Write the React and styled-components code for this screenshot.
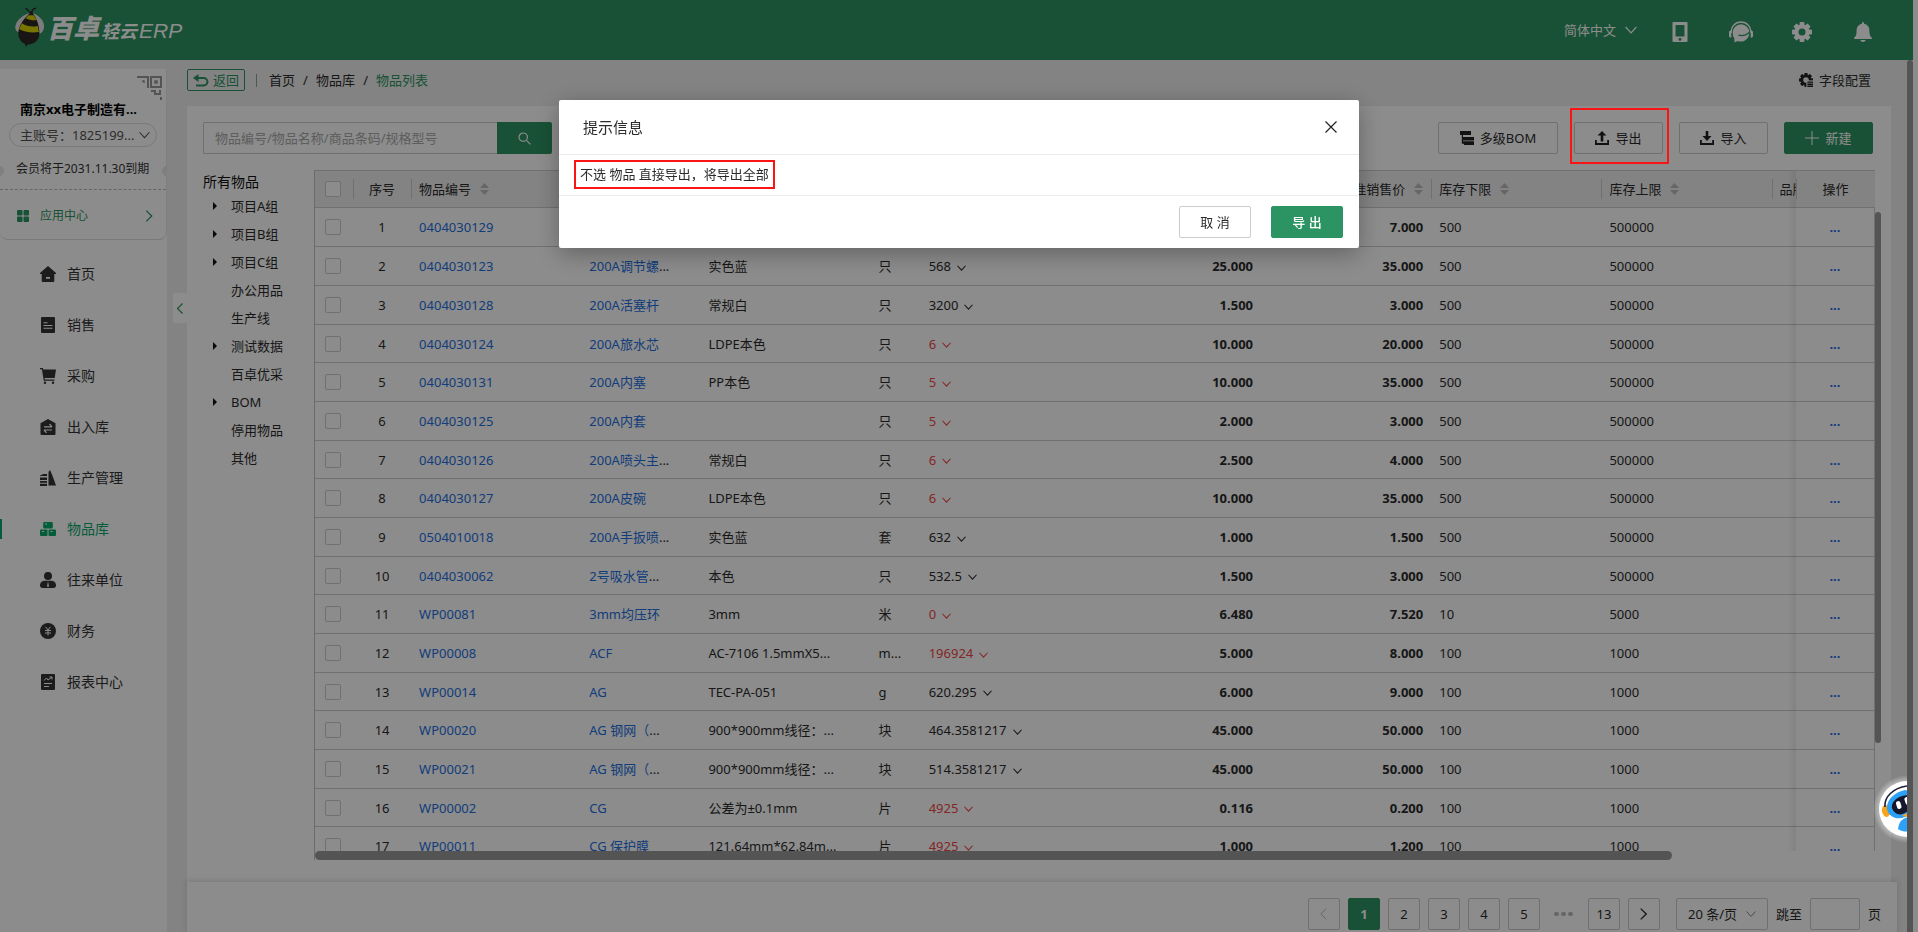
import React from "react";
import styled, { createGlobalStyle, css } from "styled-components";

const GREEN = "#2c9462";
const BLUE = "#1e70e0";
const LINE = "#cccccc";

const GlobalStyle = createGlobalStyle`
  * { box-sizing: border-box; }
  body {
    margin: 0;
    background: #fff;
    color: #2b2b2b;
    font-family: "Noto Sans", "Noto Sans CJK SC", sans-serif;
    font-size: 13px;
    line-height: 20px;
  }
  button, input, select { font: inherit; color: inherit; margin: 0; }
  button { cursor: pointer; padding: 0; background: none; border: 0; }
  a { color: inherit; text-decoration: none; }
  svg { display: block; flex: none; }
`;

/* ---------- shell ---------- */
const Shell = styled.div`
  display: flex;
  flex-direction: column;
  height: 100vh;
  margin-right: 5px;
  background: #eee;
  overflow: hidden;
`;
const TopBar = styled.header`
  flex: none;
  height: 60px;
  padding: 0 38px 0 12px;
  display: flex;
  align-items: center;
  justify-content: space-between;
  background: ${GREEN};
  color: #fff;
`;
const Brand = styled.a`
  display: flex;
  align-items: center;
  gap: 2px;
  padding-bottom: 8px;
`;
const BrandText = styled.span`
  display: flex;
  align-items: baseline;
  gap: 2px;
  font-style: italic;
  line-height: 28px;
  padding-top: 6px;
`;
const BrandName = styled.span`
  font-size: 26px;
  font-weight: 900;
`;
const BrandSub = styled.span`
  font-size: 18px;
  font-weight: 700;
`;
const BrandErp = styled.span`
  font-family: "Liberation Sans", sans-serif;
  font-size: 21px;
`;
const TopTools = styled.div`
  display: flex;
  align-items: center;
  gap: 31px;
`;
const TopIcons = styled.div`
  display: flex;
  gap: 37px;
  padding-top: 4px;
`;
const IconButton = styled.button`
  width: 24px;
  height: 24px;
  display: flex;
  align-items: center;
  justify-content: center;
`;
const SelectWrap = styled.span`
  display: flex;
  align-items: center;
  gap: 8px;
`;
const PlainSelect = styled.select`
  appearance: none;
  border: 0;
  background: none;
  padding: 0;
  outline: none;
`;
const Columns = styled.div`
  flex: 1;
  min-height: 0;
  display: flex;
`;

/* ---------- sidebar ---------- */
const Sidebar = styled.aside`
  flex: none;
  width: 167px;
  margin-top: 9px;
  background: #fff;
`;
const AccountCard = styled.section`
  position: relative;
  height: 171px;
  border-bottom: 1px solid #dcdcdc;
  border-right: 1px solid #e8e8e8;
  border-radius: 0 0 8px 8px;
  overflow: hidden;
`;
const QrIcon = styled.svg`
  position: absolute;
  top: 7px;
  right: 4px;
`;
const Company = styled.h1`
  margin: 0;
  padding: 30px 20px 0;
  font-size: 13px;
  line-height: 20px;
  font-weight: 700;
  color: #000;
  white-space: nowrap;
`;
const AccountPill = styled.label`
  display: flex;
  align-items: center;
  justify-content: space-between;
  height: 24px;
  margin: 4px 9px 0;
  padding: 0 6px 0 10px;
  border: 1px solid #dcdcdc;
  border-radius: 12px;
  color: #555;
`;
const Expiry = styled.p`
  position: relative;
  margin: 0;
  height: 43px;
  padding: 12px 0 0 16px;
  border-bottom: 1px dashed #bbb;
  white-space: nowrap;
  font-size: 12px;
  color: #333;
  &::before, &::after {
    content: "";
    position: absolute;
    top: 19px;
    width: 10px;
    height: 10px;
    border-radius: 5px;
    background: #e8e8e8;
  }
  &::before { left: -6px; }
  &::after { right: -6px; }
`;
const AppCenter = styled.a`
  display: flex;
  align-items: center;
  height: 49px;
  padding: 3px 13px 0 17px;
  gap: 11px;
  font-size: 12px;
  color: ${GREEN};
  svg:last-child { margin-left: auto; }
`;
const Menu = styled.nav`
  padding-top: 8px;
`;
const MenuItem = styled.a`
  display: flex;
  align-items: center;
  gap: 11px;
  height: 51px;
  padding-left: 40px;
  font-size: 14px;
  color: ${(p) => (p.$active ? "#08a86c" : "#333")};
  background: ${(p) =>
    p.$active ? "linear-gradient(#08a86c, #08a86c) 0 50% / 2px 20px no-repeat" : "none"};
`;
const Gutter = styled.div`
  flex: none;
  width: 20px;
  padding-top: 233px;
  display: flex;
  justify-content: flex-end;
  align-items: flex-start;
`;
const Collapse = styled.button`
  width: 14px;
  height: 30px;
  display: flex;
  align-items: center;
  justify-content: center;
  background: #fff;
  color: ${GREEN};
`;

/* ---------- main ---------- */
const Main = styled.main`
  flex: 1;
  min-width: 0;
  margin-right: 16px;
  display: flex;
  flex-direction: column;
`;
const CrumbBar = styled.div`
  flex: none;
  height: 46px;
  padding: 0 26px 6px 0;
  display: flex;
  align-items: center;
  justify-content: space-between;
`;
const Crumbs = styled.div`
  display: flex;
  align-items: center;
  gap: 8px;
`;
const BackButton = styled.button`
  display: flex;
  align-items: center;
  gap: 4px;
  height: 22px;
  padding: 0 5px;
  border: 1px solid ${GREEN};
  border-radius: 2px;
  color: ${GREEN};
`;
const Crumb = styled.a`
  color: ${(p) => (p.$current ? GREEN : "#2b2b2b")};
`;
const Divider = styled.span`
  margin: 0 4px 0 3px;
  width: 1px;
  height: 13px;
  background: #999;
`;
const Slash = styled.span`
  width: 5px;
  text-align: center;
`;
const FieldConfig = styled.button`
  display: flex;
  align-items: center;
  gap: 6px;
`;
const Panel = styled.section`
  flex: 1;
  min-height: 0;
  margin-right: 6px;
  padding: 16px 10px 22px 16px;
  display: flex;
  flex-direction: column;
  gap: 16px;
  background: #fff;
`;
const Toolbar = styled.div`
  flex: none;
  padding-right: 8px;
  display: flex;
  justify-content: space-between;
`;
const Search = styled.form`
  display: flex;
`;
const SearchInput = styled.input`
  width: 294px;
  height: 32px;
  padding: 0 11px;
  border: 1px solid ${LINE};
  border-right: 0;
  border-radius: 2px 0 0 2px;
  background: #fff;
  outline: none;
  &::placeholder { color: #aaa; opacity: 1; }
`;
const SearchButton = styled.button`
  width: 55px;
  height: 32px;
  display: flex;
  align-items: center;
  justify-content: center;
  border-radius: 0 2px 2px 0;
  background: ${GREEN};
  color: #fff;
`;
const Actions = styled.div`
  display: flex;
  gap: 16px;
`;
const ToolButton = styled.button`
  height: 32px;
  min-width: ${(p) => (p.$wide ? 120 : 89)}px;
  padding: 0 20px;
  display: flex;
  align-items: center;
  justify-content: center;
  gap: 6px;
  border: 1px solid ${(p) => (p.$primary ? GREEN : LINE)};
  border-radius: 2px;
  background: ${(p) => (p.$primary ? GREEN : "#fff")};
  color: ${(p) => (p.$primary ? "#fff" : "#2b2b2b")};
`;
const Marked = styled.div`
  position: relative;
`;
const ButtonMarker = styled.span`
  position: absolute;
  inset: -14px -6px -10px -4px;
  z-index: 1200;
  border: 2px solid #fa1414;
  pointer-events: none;
`;
const Workspace = styled.div`
  flex: 1;
  min-height: 0;
  display: flex;
`;
const Tree = styled.div`
  flex: none;
  width: 111px;
`;
const TreeRoot = styled.div`
  height: 22px;
  font-size: 14px;
  line-height: 24px;
  color: #111;
`;
const TreeList = styled.ul`
  margin: 0;
  padding: 0;
  list-style: none;
`;
const TreeNode = styled.li`
  display: flex;
  align-items: center;
  height: 28px;
  padding-left: 10px;
`;
const Caret = styled.span`
  width: 4px;
  margin-right: 14px;
  border-left: 4px solid ${(p) => (p.$show ? "#111" : "transparent")};
  border-top: 4px solid transparent;
  border-bottom: 4px solid transparent;
`;
const Grid = styled.div`
  flex: 1;
  min-width: 0;
  display: flex;
`;
const GridMain = styled.div`
  flex: 1;
  min-width: 0;
  display: flex;
  flex-direction: column;
  border-left: 1px solid #c4c4c4;
`;
const GridView = styled.div`
  flex: 1;
  min-height: 0;
  overflow: hidden;
`;
const Table = styled.table`
  width: 1792px;
  table-layout: fixed;
  border-collapse: separate;
  border-spacing: 0;
`;
const Th = styled.th`
  position: relative;
  height: 38px;
  padding: 0 8px;
  font-weight: 400;
  text-align: left;
  white-space: nowrap;
  background: #eee;
  border-top: 1px solid ${LINE};
  border-bottom: 1px solid ${LINE};
  background-image: ${(p) => (p.$first ? "none" : `linear-gradient(${LINE}, ${LINE})`)};
  background-size: 1px 20px;
  background-position: 0 50%;
  background-repeat: no-repeat;
`;
const HeadLabel = styled.span`
  display: flex;
  align-items: center;
  gap: 9px;
  justify-content: ${(p) => p.$align || "flex-start"};
`;
const Row = styled.tr`
  height: 39px;
  &:nth-child(3n + 4) { height: 38px; }
`;
const Td = styled.td`
  padding: 0 8px;
  border-bottom: 1px solid ${LINE};
  background: #fff;
  white-space: nowrap;
  overflow: hidden;
  text-align: ${(p) => p.$align || "left"};
  font-weight: ${(p) => (p.$bold ? 700 : 400)};
`;
const sticky = css`
  position: sticky;
  right: 0;
  z-index: 1;
  text-align: center;
  &::before {
    content: "";
    position: absolute;
    top: 0;
    bottom: -1px;
    left: -8px;
    width: 8px;
    background: linear-gradient(to right, rgba(0, 0, 0, 0), rgba(0, 0, 0, 0.07));
  }
`;
const StickyTh = styled(Th)`${sticky}`;
const StickyTd = styled(Td)`
  ${sticky}
  overflow: visible;
  color: ${BLUE};
  font-weight: 700;
  border-right: 1px solid ${LINE};
`;
const CellLink = styled.a`
  color: ${BLUE};
`;
const Stock = styled.span`
  display: inline-flex;
  align-items: center;
  gap: 6px;
  color: ${(p) => (p.$low ? "#f04848" : "#2b2b2b")};
  svg { margin-top: 3px; }
`;
const Check = styled.input`
  appearance: none;
  display: block;
  width: 16px;
  height: 16px;
  margin: 0 2px;
  border: 1px solid ${LINE};
  border-radius: 2px;
  background: #fff;
`;
const HTrack = styled.div`
  flex: none;
  height: 9px;
`;
const HThumb = styled.div`
  width: 87%;
  height: 9px;
  border-radius: 5px;
  background: #999;
`;
const VTrack = styled.div`
  flex: none;
  width: 6px;
  padding: 42px 0 0;
`;
const VThumb = styled.div`
  height: 82%;
  border-radius: 3px;
  background: #999;
`;
const Footer = styled.footer`
  flex: none;
  position: relative;
  display: flex;
  justify-content: flex-end;
  align-items: center;
  gap: 8px;
  height: 50px;
  padding: 14px 16px 0;
  background: #fff;
  box-shadow: 0 -1px 6px rgba(0, 0, 0, 0.14);
`;
const PageButton = styled.button`
  width: 32px;
  height: 32px;
  display: flex;
  align-items: center;
  justify-content: center;
  border: 1px solid ${(p) => (p.$active ? GREEN : LINE)};
  border-radius: 2px;
  background: ${(p) => (p.$active ? GREEN : "#fff")};
  color: ${(p) => (p.$active ? "#fff" : p.disabled ? "#bbb" : "#2b2b2b")};
  font-weight: ${(p) => (p.$active ? 700 : 400)};
`;
const Dots = styled.span`
  width: 32px;
  display: flex;
  justify-content: center;
  gap: 2px;
  i { width: 5px; height: 4px; border-radius: 2px; background: #bbb; }
`;
const PageSize = styled.label`
  height: 32px;
  margin-left: 8px;
  padding: 0 11px;
  display: flex;
  align-items: center;
  gap: 8px;
  border: 1px solid ${LINE};
  border-radius: 2px;
  svg { color: #888; }
`;
const Jump = styled.label`
  display: flex;
  align-items: center;
  gap: 8px;
`;
const JumpInput = styled.input`
  width: 50px;
  height: 32px;
  border: 1px solid ${LINE};
  border-radius: 2px;
  background: #fff;
`;
const PageScroll = styled.div`
  position: fixed;
  top: 60px;
  bottom: 0;
  right: 5px;
  width: 6px;
  border-radius: 3px 3px 0 0;
  background: #999;
`;

/* ---------- overlays ---------- */
const Mask = styled.div`
  position: fixed;
  inset: 0;
  z-index: 1000;
  padding-top: 100px;
  display: flex;
  justify-content: center;
  align-items: flex-start;
  background: rgba(0, 0, 0, 0.45);
`;
const Dialog = styled.div`
  width: 800px;
  max-width: 90%;
  border-radius: 2px;
  background: #fff;
  box-shadow: 0 6px 24px rgba(0, 0, 0, 0.3);
`;
const DialogHead = styled.div`
  display: flex;
  align-items: center;
  justify-content: space-between;
  height: 55px;
  padding: 0 16px 0 24px;
  border-bottom: 1px solid #ebebeb;
`;
const DialogTitle = styled.h2`
  margin: 0;
  font-size: 15px;
  font-weight: 400;
`;
const DialogBody = styled.div`
  display: flex;
  padding: 5px 15px 6px;
  border-bottom: 1px solid #ebebeb;
`;
const Message = styled.p`
  margin: 0;
  padding: 2px 4px 3px;
  line-height: 20px;
  border: 2px solid #fa1414;
`;
const DialogFoot = styled.div`
  display: flex;
  justify-content: flex-end;
  gap: 20px;
  padding: 10px 16px;
`;
const DialogButton = styled.button`
  width: 72px;
  height: 32px;
  border: 1px solid ${(p) => (p.$primary ? GREEN : "#ccc")};
  border-radius: 2px;
  background: ${(p) => (p.$primary ? GREEN : "#fff")};
  color: ${(p) => (p.$primary ? "#fff" : "#2b2b2b")};
  font-weight: ${(p) => (p.$primary ? 500 : 400)};
`;
const RobotDock = styled.button`
  position: fixed;
  right: 11px;
  bottom: 87px;
  z-index: 1100;
  width: 36px;
  height: 72px;
  overflow: hidden;
`;

/* ---------- drawings ---------- */
const Chevron = ({ w = 10, h = 6, sw = 1 }) => (
  <svg width={w} height={h} viewBox="0 0 10 6" fill="none" stroke="currentColor" strokeWidth={sw} aria-hidden="true">
    <path d="M0.5 0.5 5 5.4 9.5 0.5" />
  </svg>
);
const SideChevron = ({ left, w = 7, h = 12, sw = 1.3 }) => (
  <svg width={w} height={h} viewBox="0 0 7 12" fill="none" stroke="currentColor" strokeWidth={sw} aria-hidden="true">
    <path d={left ? "M6.3 0.6 0.8 6l5.5 5.4" : "M0.7 0.6 6.2 6 0.7 11.4"} />
  </svg>
);
const Sorter = () => (
  <svg width="9" height="12" viewBox="0 0 9 12" fill="#bbb" aria-hidden="true">
    <path d="M4.5 0 9 5H0zM4.5 12 9 7H0z" />
  </svg>
);
const Bee = () => (
  <svg width="33" height="42" viewBox="0 0 33 42" aria-hidden="true">
    <path d="M17 6.500c-1-1.500-1.500-2.800-3.600-3M20 6.500c.3-1.700 1.500-3 4-3.300" stroke="#2e2725" strokeWidth="1.400" fill="none" />
    <circle cx="19" cy="8" r="2" fill="#2e2725" />
    <path d="M18 8C9 10.500 3 17 3.300 23c.6 3.400 2.800 4.800 4.700 3.600C9.500 19 14 12 18 8z" fill="#e4e2e2" />
    <path d="M21 8c7 3 12 9 11 14.500-.6 4-3 6.400-5 6C27 20 24 13 21 8z" fill="#e4e2e2" />
    <path d="M19.500 7C13 12 7 19.500 6.400 27c-.5 6.400 3 10.600 6.600 12l1 3 1.800-2.600c7 0 11.600-4.400 11.600-11.400C27.400 20 24 11.500 19.500 7z" fill="#2e2725" />
    <path d="M16.500 10.200h5.300L24.600 15c-3.200.6-6.800.1-10.800-1.800z" fill="#d9d400" />
    <path d="M10 18.300c4.700 3 10 4 15.900 2.700l1 6C19 28.100 12 26.800 7 24z" fill="#d9d400" />
  </svg>
);
const PhoneIcon = () => (
  <svg width="16" height="20" viewBox="0 0 16 20" aria-hidden="true">
    <path fillRule="evenodd" fill="#fff" d="M1.500 0h13A1 1 0 0 1 15.500 1v18a1 1 0 0 1-1 1h-13a1 1 0 0 1-1-1V1a1 1 0 0 1 1-1zM3.500 3v11.500h9V3zM8 15.800a1.500 1.500 0 1 0 0 3 1.500 1.500 0 0 0 0-3z" />
  </svg>
);
const HeadsetIcon = () => (
  <svg width="24" height="22" viewBox="0 0 24 22" fill="none" aria-hidden="true">
    <path d="M2.300 12C1.800 5.500 6.500 1 12 1s10.200 4.500 9.700 11" stroke="#fff" strokeWidth="1.300" />
    <path fill="#fff" d="M0 10.500 2.300 9v8L0 15.800zM24 10.500 21.700 9v8l2.300-1.200zM12 3.200a8.300 8.300 0 0 1 8.300 8.500c0 5-3.800 8.800-8.300 8.800-1.200 0-2.300-.2-3.300-.6L5.500 21.500 5.300 17.300a8.300 8.300 0 0 1-1.600-5.600A8.300 8.300 0 0 1 12 3.200z" />
    <path d="M9.500 14.200c4 1.200 9 0 11.500-3.500" stroke={GREEN} strokeWidth="1.300" />
  </svg>
);
const teeth = [0, 45, 90, 135, 180, 225, 270, 315];
const Gear = ({ size = 20, color = "#fff", hole = GREEN, list }) => (
  <svg width={size} height={size} viewBox="0 0 20 20" fill={color} aria-hidden="true">
    <circle cx="10" cy="10" r="7.600" />
    {teeth.map((a) => (
      <rect key={a} x="7.600" y="0" width="4.800" height="5" rx="1" transform={`rotate(${a} 10 10)`} />
    ))}
    <circle cx="10" cy="10" r={list ? 4 : 3.5} fill={hole} />
    {list && <path fill={hole} d="M10.500 10.500H20V20h-9.500z" />}
    {list && <path d="M12 12h8v2h-8zM12 15h8v2h-8zM12 18h8v2h-8z" />}
  </svg>
);
const BellIcon = () => (
  <svg width="18" height="20" viewBox="0 0 18 20" fill="#fff" aria-hidden="true">
    <path d="M8 1a1 1 0 0 1 2 0v.8c3.200.5 5.400 3.200 5.400 6.400 0 4 .6 6 2.200 7.300.8.700.4 1.500-.4 1.500H.8C0 17-.4 16.200.4 15.500 2 14.200 2.600 12.200 2.600 8.200 2.600 5 4.800 2.300 8 1.800zM6.200 18h5.600c-.6 1.300-1.500 2-2.800 2s-2.200-.7-2.800-2z" />
  </svg>
);
const BackArrow = () => (
  <svg width="16" height="13" viewBox="0 0 16 13" fill="none" aria-hidden="true">
    <path d="M4 4h6.700a3.700 3.700 0 0 1 0 7.500H3" stroke={GREEN} strokeWidth="2" />
    <path d="M0 4 5.500 0v8z" fill={GREEN} />
  </svg>
);
const SearchIcon = () => (
  <svg width="13" height="13" viewBox="0 0 13 13" fill="none" stroke="#fff" strokeWidth="1.200" aria-hidden="true">
    <circle cx="5.200" cy="5.200" r="4.200" />
    <path d="m8.400 8.400 4 4" />
  </svg>
);
const BomIcon = () => (
  <svg width="14" height="14" viewBox="0 0 14 14" fill="#222" aria-hidden="true">
    <path d="M0 0h11v4H3v2h11v3.500H3V10.300h11V14H4v-1.200H1.800V4H0z" />
  </svg>
);
const ExportIcon = () => (
  <svg width="14" height="14" viewBox="0 0 14 14" fill="#222" aria-hidden="true">
    <path d="M7 0 11.500 4.500H8.300V10.500H5.700V4.500H2.500zM0 9h1.800v3h10.400V9H14v5H0z" />
  </svg>
);
const ImportIcon = () => (
  <svg width="14" height="14" viewBox="0 0 14 14" fill="#222" aria-hidden="true">
    <path d="M5.700 0h2.600v5h3.200L7 10 2.500 5h3.200zM0 9h1.800v3h10.400V9H14v5H0z" />
  </svg>
);
const PlusIcon = () => (
  <svg width="14" height="14" viewBox="0 0 14 14" stroke="#fff" strokeWidth="1" aria-hidden="true">
    <path d="M7 0v14M0 7h14" />
  </svg>
);
const CloseIcon = () => (
  <svg width="12" height="12" viewBox="0 0 12 12" stroke="#222" strokeWidth="1.200" aria-hidden="true">
    <path d="M0.500 0.500 11.500 11.500M11.500 0.500 0.500 11.500" />
  </svg>
);
const Tiles = () => (
  <svg width="12" height="12" viewBox="0 0 12 12" fill={GREEN} aria-hidden="true">
    <rect width="5.500" height="5.500" rx="1" />
    <rect x="6.500" width="5.500" height="5.500" rx="1" />
    <rect y="6.500" width="5.500" height="5.500" rx="1" />
    <rect x="6.500" y="6.500" width="5.500" height="5.500" rx="1" />
  </svg>
);
const menuPaths = {
  home: <path d="M8 0 16 7v1h-1.700v7a1 1 0 0 1-1 1H2.700a1 1 0 0 1-1-1V8H0V7zM6 11v1.700h4V11z" fillRule="evenodd" />,
  sales: <path d="M2 0h12a1 1 0 0 1 1 1v14a1 1 0 0 1-1 1H2a1 1 0 0 1-1-1V1a1 1 0 0 1 1-1zM3.500 5.200v1h4v-1zM3.500 8v1h9V8zM3.500 10.700v1h9v-1z" fillRule="evenodd" />,
  cart: (
    <g>
      <path d="M0 0h2.800l.5 1.500H16L14.700 10H4.500l.4 1.500h9.600v1.300H3.800L1.900 1.300H0z" />
      <circle cx="5" cy="14.800" r="1.200" />
      <circle cx="13" cy="14.800" r="1.200" />
    </g>
  ),
  stock: (
    <g>
      <path d="M8 0 15.500 4.200V15a1 1 0 0 1-1 1h-13a1 1 0 0 1-1-1V4.200z" />
      <path d="M4 7.800h8M9.500 5l2.500 2.800M12 11H4M6.500 13.800 4 11" stroke="#fff" strokeWidth="1.200" fill="none" />
    </g>
  ),
  make: (
    <g>
      <path d="M8.500 2 10 0l2.200 5L16 15.500H8.500z" />
      <path d="M0 5.500 3.500 4H7v2H0zM0 7.500h7V10H0zM0 11h7v1.800H0zM0 13.800h7V16H0z" />
    </g>
  ),
  goods: (
    <g>
      <rect x="3.200" y="1" width="9.600" height="6.500" rx="1" />
      <rect x="0" y="8.500" width="7.500" height="6.500" rx="1" />
      <rect x="8.500" y="8.500" width="7.500" height="6.500" rx="1" />
      <path d="M5 3h2M2 10.500h2M10.500 10.500h2" stroke="#fff" />
    </g>
  ),
  partner: (
    <g>
      <circle cx="8" cy="4" r="4" />
      <path d="M5 8.800h6c3 0 5 2 5 4.700C16 15 15 16 13.500 16h-11C1 16 0 15 0 13.500c0-2.700 2-4.700 5-4.700z" />
      <path d="M8 9.500 9 14 8 15.200 7 14z" fill="#fff" />
    </g>
  ),
  money: (
    <g>
      <circle cx="8" cy="8" r="8" />
      <path d="M5.500 3.800 8 7l2.500-3.200M8 7v5.500M5 7.500h6M5 10h6" stroke="#fff" fill="none" />
    </g>
  ),
  report: (
    <g>
      <rect x="1" y="0" width="14" height="16" rx="1" />
      <path d="M4 6.500 6.500 4 8 6l4-3M9.500 3H12v2.500M4 9.500h8M4 12.500h5" stroke="#fff" fill="none" />
    </g>
  ),
};
const MenuIcon = ({ name }) => (
  <svg width="16" height="16" viewBox="0 0 16 16" fill="currentColor" aria-hidden="true">
    {menuPaths[name]}
  </svg>
);
const Robot = () => (
  <svg width="64" height="72" viewBox="0 0 64 72" aria-hidden="true">
    <defs>
      <radialGradient id="glow">
        <stop offset="0.820" stopColor="#fff" stopOpacity="0.400" />
        <stop offset="1" stopColor="#fff" stopOpacity="0" />
      </radialGradient>
    </defs>
    <circle cx="36" cy="36" r="34" fill="url(#glow)" />
    <circle cx="36" cy="36" r="28" fill="#fff" />
    <ellipse cx="15" cy="38" rx="4" ry="6" fill="#f9a21b" transform="rotate(-12 15 38)" />
    <path d="M14 34C13 24 22 15 36 13" stroke="#1c1f35" strokeWidth="1.600" fill="none" />
    <path d="M16 36c-1-9 8-17 18-19l14 4v22c-6 0-9-1-14 1-7 3-16 1-18-8z" fill="#2da1f8" />
    <path d="M21 35c-1-6 5-11 12-12.500L48 21v16c-6 0-10 0-14 3-5 3-11 1-13-5z" fill="#15172c" />
    <rect x="25.500" y="28" width="4.500" height="8" rx="2.200" fill="#fff" transform="rotate(-18 27.700 32)" />
    <rect x="34" y="24" width="4.500" height="8" rx="2.200" fill="#fff" transform="rotate(-18 36 28)" />
    <path d="M31 43c3-3 6-3 9-2l-3 3z" fill="#f9a21b" />
    <path d="M27 56c1-8 5-12 13-12v14c-4 1-9 1-13-2z" fill="#2da1f8" />
  </svg>
);

/* ---------- data ---------- */
const menu = [
  ["home", "首页"],
  ["sales", "销售"],
  ["cart", "采购"],
  ["stock", "出入库"],
  ["make", "生产管理"],
  ["goods", "物品库"],
  ["partner", "往来单位"],
  ["money", "财务"],
  ["report", "报表中心"],
];
const tree = [
  ["项目A组", true],
  ["项目B组", true],
  ["项目C组", true],
  ["办公用品", false],
  ["生产线", false],
  ["测试数据", true],
  ["百卓优采", false],
  ["BOM", true],
  ["停用物品", false],
  ["其他", false],
];
const columns = [
  { title: "物品编号", width: 170 },
  { title: "物品名称", width: 119 },
  { title: "规格型号", width: 170 },
  { title: "单位", width: 50, plain: true },
  { title: "库存数量", width: 170 },
  { title: "标准采购价", width: 170, align: "flex-end" },
  { title: "标准销售价", width: 170, align: "flex-end" },
  { title: "库存下限", width: 170 },
  { title: "库存上限", width: 170 },
  { title: "品牌", width: 256 },
];
const rows = [
  ["0404030129", "", "", "", "", 0, "", "7.000", "500", "500000"],
  ["0404030123", "200A调节螺...", "实色蓝", "只", "568", 0, "25.000", "35.000", "500", "500000"],
  ["0404030128", "200A活塞杆", "常规白", "只", "3200", 0, "1.500", "3.000", "500", "500000"],
  ["0404030124", "200A旅水芯", "LDPE本色", "只", "6", 1, "10.000", "20.000", "500", "500000"],
  ["0404030131", "200A内塞", "PP本色", "只", "5", 1, "10.000", "35.000", "500", "500000"],
  ["0404030125", "200A内套", "", "只", "5", 1, "2.000", "3.000", "500", "500000"],
  ["0404030126", "200A喷头主...", "常规白", "只", "6", 1, "2.500", "4.000", "500", "500000"],
  ["0404030127", "200A皮碗", "LDPE本色", "只", "6", 1, "10.000", "35.000", "500", "500000"],
  ["0504010018", "200A手扳喷...", "实色蓝", "套", "632", 0, "1.000", "1.500", "500", "500000"],
  ["0404030062", "2号吸水管...", "本色", "只", "532.5", 0, "1.500", "3.000", "500", "500000"],
  ["WP00081", "3mm均压环", "3mm", "米", "0", 1, "6.480", "7.520", "10", "5000"],
  ["WP00008", "ACF", "AC-7106 1.5mmX5...", "m...", "196924", 1, "5.000", "8.000", "100", "1000"],
  ["WP00014", "AG", "TEC-PA-051", "g", "620.295", 0, "6.000", "9.000", "100", "1000"],
  ["WP00020", "AG 钢网（...", "900*900mm线径：...", "块", "464.3581217", 0, "45.000", "50.000", "100", "1000"],
  ["WP00021", "AG 钢网（...", "900*900mm线径：...", "块", "514.3581217", 0, "45.000", "50.000", "100", "1000"],
  ["WP00002", "CG", "公差为±0.1mm", "片", "4925", 1, "0.116", "0.200", "100", "1000"],
  ["WP00011", "CG 保护膜", "121.64mm*62.84m...", "片", "4925", 1, "1.000", "1.200", "100", "1000"],
];

const NameCell = ({ text }) => {
  const cut = text.endsWith("...");
  return (
    <Td>
      <CellLink href="#">{cut ? text.slice(0, -3) : text}</CellLink>
      {cut && "..."}
    </Td>
  );
};

export default function App() {
  return (
    <>
      <GlobalStyle />
      <Shell>
        <TopBar>
          <Brand href="#">
            <Bee />
            <BrandText>
              <BrandName>百卓</BrandName>
              <BrandSub>轻云</BrandSub>
              <BrandErp>ERP</BrandErp>
            </BrandText>
          </Brand>
          <TopTools>
            <SelectWrap>
              <PlainSelect aria-label="语言"><option>简体中文</option></PlainSelect>
              <Chevron w={12} h={8} />
            </SelectWrap>
            <TopIcons>
              <IconButton aria-label="手机端"><PhoneIcon /></IconButton>
              <IconButton aria-label="客服"><HeadsetIcon /></IconButton>
              <IconButton aria-label="设置"><Gear /></IconButton>
              <IconButton aria-label="通知"><BellIcon /></IconButton>
            </TopIcons>
          </TopTools>
        </TopBar>
        <Columns>
          <Sidebar>
            <AccountCard>
              <QrIcon width="25" height="24" viewBox="0 0 25 24" fill="none" stroke="#999" strokeWidth="2">
                <path d="M0 1h11v11M14 1h10v10H14zM14 15h4v3h5v-4M24 21v3" />
                <path d="M5 5h2v2M18 5h2v2h-2z" strokeWidth="1.500" />
              </QrIcon>
              <Company>南京xx电子制造有...</Company>
              <AccountPill>
                <PlainSelect aria-label="账号"><option>主账号：1825199...</option></PlainSelect>
                <Chevron w={11} h={8} />
              </AccountPill>
              <Expiry>会员将于2031.11.30到期</Expiry>
              <AppCenter href="#">
                <Tiles />
                应用中心
                <SideChevron w={8} h={12} />
              </AppCenter>
            </AccountCard>
            <Menu>
              {menu.map(([icon, label]) => (
                <MenuItem key={icon} href="#" $active={icon === "goods"}>
                  <MenuIcon name={icon} />
                  {label}
                </MenuItem>
              ))}
            </Menu>
          </Sidebar>
          <Gutter>
            <Collapse aria-label="收起"><SideChevron left w={8} h={11} /></Collapse>
          </Gutter>
          <Main>
            <CrumbBar>
              <Crumbs>
                <BackButton><BackArrow />返回</BackButton>
                <Divider />
                <Crumb href="#">首页</Crumb>
                <Slash>/</Slash>
                <Crumb href="#">物品库</Crumb>
                <Slash>/</Slash>
                <Crumb href="#" $current>物品列表</Crumb>
              </Crumbs>
              <FieldConfig><Gear size={14} color="#222" hole="#eee" list />字段配置</FieldConfig>
            </CrumbBar>
            <Panel>
              <Toolbar>
                <Search>
                  <SearchInput aria-label="搜索物品" placeholder="物品编号/物品名称/商品条码/规格型号" />
                  <SearchButton type="button" aria-label="搜索"><SearchIcon /></SearchButton>
                </Search>
                <Actions>
                  <ToolButton $wide><BomIcon />多级BOM</ToolButton>
                  <Marked>
                    <ToolButton><ExportIcon />导出</ToolButton>
                    <ButtonMarker />
                  </Marked>
                  <ToolButton><ImportIcon />导入</ToolButton>
                  <ToolButton $primary><PlusIcon />新建</ToolButton>
                </Actions>
              </Toolbar>
              <Workspace>
                <Tree>
                  <TreeRoot>所有物品</TreeRoot>
                  <TreeList>
                    {tree.map(([label, open]) => (
                      <TreeNode key={label}><Caret $show={open} />{label}</TreeNode>
                    ))}
                  </TreeList>
                </Tree>
                <Grid>
                  <GridMain>
                    <GridView>
                      <Table>
                        <colgroup>
                          <col width="38" />
                          <col width="58" />
                          {columns.map((c) => <col key={c.title} width={c.width} />)}
                          <col width="79" />
                        </colgroup>
                        <thead>
                          <tr>
                            <Th $first><Check type="checkbox" aria-label="全选" /></Th>
                            <Th><HeadLabel $align="center">序号</HeadLabel></Th>
                            {columns.map((c) => (
                              <Th key={c.title}>
                                <HeadLabel $align={c.align}>{c.title}{!c.plain && <Sorter />}</HeadLabel>
                              </Th>
                            ))}
                            <StickyTh>操作</StickyTh>
                          </tr>
                        </thead>
                        <tbody>
                          {rows.map((r, i) => (
                            <Row key={r[0]}>
                              <Td><Check type="checkbox" aria-label={`选择 ${r[0]}`} /></Td>
                              <Td $align="center">{i + 1}</Td>
                              <Td><CellLink href="#">{r[0]}</CellLink></Td>
                              <NameCell text={r[1]} />
                              <Td>{r[2]}</Td>
                              <Td>{r[3]}</Td>
                              <Td>
                                {r[4] && <Stock $low={r[5] === 1}>{r[4]}<Chevron w={9} h={6} sw={1.2} /></Stock>}
                              </Td>
                              <Td $align="right" $bold>{r[6]}</Td>
                              <Td $align="right" $bold>{r[7]}</Td>
                              <Td>{r[8]}</Td>
                              <Td>{r[9]}</Td>
                              <Td />
                              <StickyTd>...</StickyTd>
                            </Row>
                          ))}
                        </tbody>
                      </Table>
                    </GridView>
                    <HTrack><HThumb /></HTrack>
                  </GridMain>
                  <VTrack><VThumb /></VTrack>
                </Grid>
              </Workspace>
            </Panel>
            <Footer>
              <PageButton disabled aria-label="上一页"><SideChevron left w={7} h={12} sw={1} /></PageButton>
              {[1, 2, 3, 4, 5].map((n) => (
                <PageButton key={n} $active={n === 1}>{n}</PageButton>
              ))}
              <Dots><i /><i /><i /></Dots>
              <PageButton>13</PageButton>
              <PageButton aria-label="下一页"><SideChevron w={7} h={12} /></PageButton>
              <PageSize>
                <PlainSelect aria-label="每页条数"><option>20 条/页</option></PlainSelect>
                <Chevron w={10} h={8} />
              </PageSize>
              <Jump>跳至<JumpInput />页</Jump>
            </Footer>
          </Main>
        </Columns>
        <PageScroll />
      </Shell>
      <Mask>
        <Dialog role="dialog" aria-modal="true" aria-labelledby="tip-title">
          <DialogHead>
            <DialogTitle id="tip-title">提示信息</DialogTitle>
            <IconButton aria-label="关闭"><CloseIcon /></IconButton>
          </DialogHead>
          <DialogBody>
            <Message>不选 物品 直接导出，将导出全部</Message>
          </DialogBody>
          <DialogFoot>
            <DialogButton>取 消</DialogButton>
            <DialogButton $primary>导 出</DialogButton>
          </DialogFoot>
        </Dialog>
      </Mask>
      <RobotDock aria-label="智能助手"><Robot /></RobotDock>
    </>
  );
}
